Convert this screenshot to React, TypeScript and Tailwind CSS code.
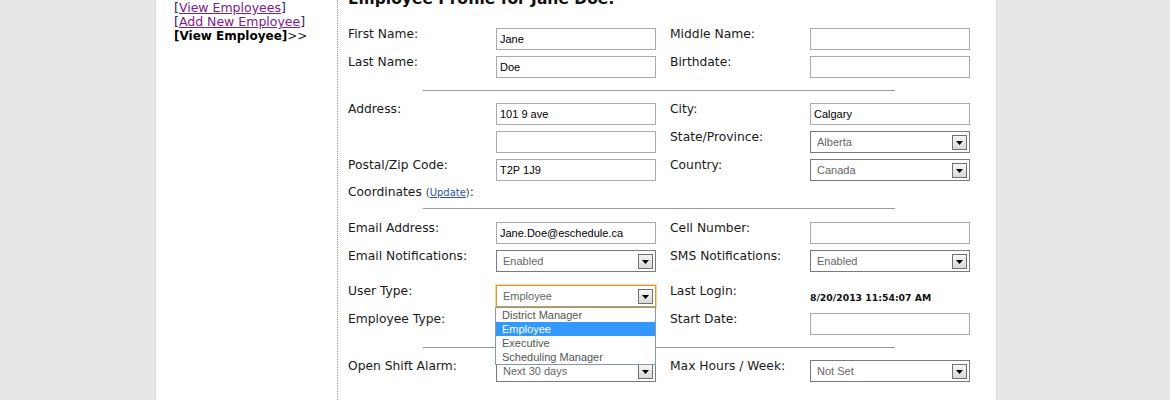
import React from "react";

const V = { fontFamily: '"DejaVu Sans", Verdana, sans-serif' } as React.CSSProperties;
const A = { fontFamily: '"Liberation Sans", Arial, sans-serif' } as React.CSSProperties;

function Label({ children, w }: { children: React.ReactNode; w: string }) {
  return (
    <div className={`${w} shrink-0 -mt-[2px] text-[12.3px] leading-[16px] text-[#1a1a1a]`} style={V}>
      {children}
    </div>
  );
}

function TextBox({ value = "" }: { value?: string }) {
  return (
    <div
      className="h-[22px] w-[160px] shrink-0 border border-[#a9a9a9] bg-white pl-[3px] flex items-center text-[11px] text-black"
      style={A}
    >
      {value}
    </div>
  );
}

function Arrow() {
  return (
    <div className="w-[15px] h-[15px] border border-[#707070] bg-gradient-to-b from-[#f6f6f6] to-[#d9d9d9] flex items-end justify-center pb-[4px]">
      <svg width="7" height="4" viewBox="0 0 7 4">
        <path d="M0 0H7L3.5 4Z" fill="#000" />
      </svg>
    </div>
  );
}

function Select({ value, focused = false, children }: { value: string; focused?: boolean; children?: React.ReactNode }) {
  return (
    <div className="relative w-[160px] shrink-0">
      <div
        className={`h-[22px] w-[160px] border bg-white pl-[6px] pr-[2px] flex items-center justify-between text-[11px] text-[#666] ${
          focused ? "border-[#d39a3a] shadow-[0_0_0_1px_#f1d6a0]" : "border-[#7a7a7a]"
        }`}
        style={A}
      >
        <span className="pt-[1px]">{value}</span>
        <Arrow />
      </div>
      {children}
    </div>
  );
}

function Row({
  l,
  lf,
  r,
  rf,
  className = "",
}: {
  l: React.ReactNode;
  lf: React.ReactNode;
  r?: React.ReactNode;
  rf?: React.ReactNode;
  className?: string;
}) {
  return (
    <div className={`flex h-[22px] items-start ${className}`}>
      <Label w="w-[148px]">{l}</Label>
      {lf}
      <div className="w-[14px] shrink-0" />
      <Label w="w-[140px]">{r}</Label>
      {rf}
    </div>
  );
}

function Sep({ className = "" }: { className?: string }) {
  return <div className={`ml-[75px] w-[472px] h-px bg-[#9a9a9a] ${className}`} />;
}

function NavLink({ text }: { text: string }) {
  return (
    <div>
      <span className="text-[#25255c]">[</span>
      <span className="text-[#80208a] underline">{text}</span>
      <span className="text-[#25255c]">]</span>
    </div>
  );
}

export default function App() {
  const options = ["District Manager", "Employee", "Executive", "Scheduling Manager"];
  return (
    <div className="h-[400px] w-full overflow-hidden bg-[#e7e7e7]">
      <div className="ml-[155px] w-[842px] h-[400px] bg-white border-x border-[#d4dae2] flex">
        <div className="w-[181px] shrink-0 pl-[18px] pt-[1px] text-[12.5px] leading-[14px]" style={V}>
          <NavLink text="View Employees" />
          <NavLink text="Add New Employee" />
          <div className="text-black text-[12px]">
            <span className="font-bold">[View Employee]</span>
            <span className="text-[#222]">&gt;&gt;</span>
          </div>
        </div>
        <div className="flex-1 border-l border-dotted border-[#9a9a9a] pl-[10px]">
          <div className="-mt-[9px] h-[17px] text-[15.5px] leading-[17px] font-bold text-[#111]" style={V}>
            Employee Profile for Jane Doe:
          </div>
          <Row className="mt-[20px]" l="First Name:" lf={<TextBox value="Jane" />} r="Middle Name:" rf={<TextBox />} />
          <Row className="mt-[6px]" l="Last Name:" lf={<TextBox value="Doe" />} r="Birthdate:" rf={<TextBox />} />
          <Sep className="mt-[12px]" />
          <Row className="mt-[12px]" l="Address:" lf={<TextBox value="101 9 ave" />} r="City:" rf={<TextBox value="Calgary" />} />
          <Row className="mt-[6px]" l="" lf={<TextBox />} r="State/Province:" rf={<Select value="Alberta" />} />
          <Row className="mt-[6px]" l="Postal/Zip Code:" lf={<TextBox value="T2P 1J9" />} r="Country:" rf={<Select value="Canada" />} />
          <div className="mt-[3px] h-[16px] text-[12.3px] leading-[16px] text-[#1a1a1a]" style={V}>
            Coordinates <span className="text-[10px] text-[#333]">(<span className="text-[#3050b0] underline">Update</span>)</span>:
          </div>
          <Sep className="mt-[8px]" />
          <Row className="mt-[13px]" l="Email Address:" lf={<TextBox value="Jane.Doe@eschedule.ca" />} r="Cell Number:" rf={<TextBox />} />
          <Row className="mt-[6px]" l="Email Notifications:" lf={<Select value="Enabled" />} r="SMS Notifications:" rf={<Select value="Enabled" />} />
          <Row
            className="mt-[13px] relative z-10"
            l="User Type:"
            lf={
              <Select value="Employee" focused>
                <div className="absolute left-[-1px] top-[22px] w-[161px] border border-[#8797ab] bg-white py-0 text-[11px]" style={A}>
                  {options.map((o) => (
                    <div
                      key={o}
                      className={`h-[14px] leading-[14px] pl-[6px] ${o === "Employee" ? "bg-[#3399ff] text-white" : "text-[#555]"}`}
                    >
                      {o}
                    </div>
                  ))}
                </div>
              </Select>
            }
            r="Last Login:"
            rf={
              <div className="pt-[7px] text-[9.3px] leading-[12px] font-bold text-[#111]" style={V}>
                8/20/2013 11:54:07 AM
              </div>
            }
          />
          <Row className="mt-[6px]" l="Employee Type:" lf={<Select value="" />} r="Start Date:" rf={<TextBox />} />
          <Sep className="mt-[12px]" />
          <Row className="mt-[12px]" l="Open Shift Alarm:" lf={<Select value="Next 30 days" />} r="Max Hours / Week:" rf={<Select value="Not Set" />} />
        </div>
      </div>
    </div>
  );
}
